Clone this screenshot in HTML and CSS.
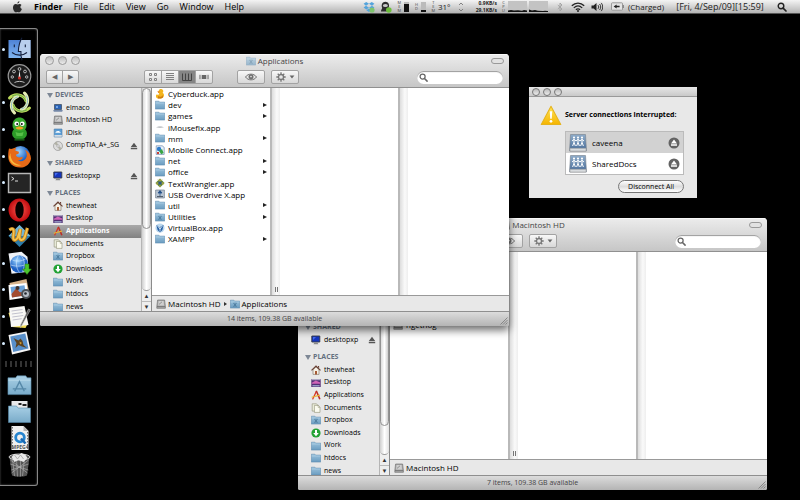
FILE: index.html
```
<!DOCTYPE html>
<html lang="en">
<head>
<meta charset="utf-8">
<title>Finder</title>
<link rel="stylesheet" href="styles.css">
</head>
<body>
<svg class="sprite" aria-hidden="true">
  <defs>
    <linearGradient id="gFolder" x1="0" y1="0" x2="0" y2="1"><stop offset="0" stop-color="#9cc3dd"/><stop offset="1" stop-color="#6a9cc0"/></linearGradient>
    <linearGradient id="gBigFolder" x1="0" y1="0" x2="0" y2="1"><stop offset="0" stop-color="#a9d0e6"/><stop offset="1" stop-color="#79abc9"/></linearGradient>
    <linearGradient id="gWarn" x1="0" y1="0" x2="0" y2="1"><stop offset="0" stop-color="#ffe65a"/><stop offset="1" stop-color="#f5b400"/></linearGradient>
    <linearGradient id="gDrive" x1="0" y1="0" x2="0" y2="1"><stop offset="0" stop-color="#8facc9"/><stop offset="1" stop-color="#476c9a"/></linearGradient>
    <linearGradient id="gFinder" x1="0" y1="0" x2="0" y2="1"><stop offset="0" stop-color="#4f83d6"/><stop offset="1" stop-color="#7fb4f0"/></linearGradient>
    <radialGradient id="gOpera"><stop offset="0" stop-color="#ff5a50"/><stop offset="1" stop-color="#c10c10"/></radialGradient>
    <radialGradient id="gGlobe" cx=".4" cy=".3"><stop offset="0" stop-color="#9fd6ff"/><stop offset="1" stop-color="#1c60c4"/></radialGradient>
  </defs>
  <symbol id="folder" viewBox="0 0 10 10"><path d="M.3 1.2h3.6l.8.9h5v7H.3z" fill="url(#gFolder)" stroke="#5684a8" stroke-width=".5"/><path d="M.6 3h8.8" stroke="#c2dcec" stroke-width=".5"/></symbol>
  <symbol id="folder-mark" viewBox="0 0 10 10"><use href="#folder"/><path d="M3.2 4l3.6 3.6M6.8 4L3.2 7.6M5 3.6v4.4" stroke="#487799" stroke-width=".8"/></symbol>
  <symbol id="laptop" viewBox="0 0 10 10"><path d="M1.5 1.5h7v5h-7z" fill="#2b63b4" stroke="#3a4658" stroke-width=".7"/><path d="M3 3h2v2H3z" fill="#74a4e4"/><path d="M.2 7h9.6l-.6 1.800H.8z" fill="#7488a8"/></symbol>
  <symbol id="hd" viewBox="0 0 10 10"><path d="M1.6 1h7l.8 6.5v1.8H.8V7.5z" fill="#a9a9a9" stroke="#666" stroke-width=".6"/><path d="M2.6 2h5l.4 4.5H2.2z" fill="#cfcfcf"/><path d="M3 5.4l3-2.6" stroke="#777" stroke-width=".7"/><path d="M1 7.6h8.2" stroke="#555" stroke-width=".6"/></symbol>
  <symbol id="idisk" viewBox="0 0 10 10"><path d="M1.2 1h7.8v8H1.2z" fill="#5d9fd6" stroke="#4a78a4" stroke-width=".6"/><path d="M2.4 4.800c0-2 4-3 5.400 0z" fill="#fff"/><path d="M1.4 7h7.4v1.800H1.4z" fill="#d7dde2"/></symbol>
  <symbol id="disc" viewBox="0 0 10 10"><circle cx="5" cy="5" r="4.5" fill="#ddd" stroke="#888" stroke-width=".6"/><path d="M5 5L1.2 3A4.3 4.3 0 0 1 4 .8zM5 5l3.8 2A4.3 4.3 0 0 1 6 9.2z" fill="#b2b2a6"/><circle cx="5" cy="5" r="1.2" fill="#fff" stroke="#777" stroke-width=".5"/></symbol>
  <symbol id="pc" viewBox="0 0 10 10"><path d="M.8 1h8v6h-8z" fill="#1636bd" stroke="#353a45" stroke-width=".9"/><path d="M2 2h3L2 5z" fill="#456cf0"/><path d="M3.4 7.4h3l1 1.8h-5z" fill="#888"/></symbol>
  <symbol id="home" viewBox="0 0 10 10"><path d="M2 4.6V9.4h6V4.6L5 2z" fill="#f6f1e6" stroke="#77695c" stroke-width=".6"/><path d="M.5 5.4L5 1l4.5 4.4" fill="none" stroke="#6a4034" stroke-width="1.1"/><path d="M4 6h2v3.4H4z" fill="#a65a34"/><path d="M7 .9h1.1v2.3L7 2.2z" fill="#6a4034"/></symbol>
  <symbol id="desk" viewBox="0 0 10 10"><path d="M.3 1h9.4v8H.3z" fill="#522e74"/><path d="M.8 4.8l4-2.4 4.4 2.2v1.2H.8z" fill="#d063b8"/><path d="M.5 1.2h9v1h-9z" fill="#c7c7d8"/><path d="M1.4 7.2h7.2v1.2H1.4z" fill="#a4b5d8"/></symbol>
  <symbol id="apps" viewBox="0 0 10 10"><path d="M1 9.2L4.8 1l1.2.6L2.2 9.5z" fill="#d83020"/><path d="M4.6 1l1.4-.4L9.6 9l-1.5.4z" fill="#bc2c24"/><path d="M.5 6.8l8.2-2.2.4 1.2-8.3 2z" fill="#e9b030"/></symbol>
  <symbol id="docs" viewBox="0 0 10 10"><path d="M1.2.8h4.3l1.2 1.3v6H1.2z" fill="#eef0df" stroke="#8c8c70" stroke-width=".6"/><path d="M3.4 2.4h4l1.6 1.7v5.3H3.4z" fill="#fbfbf0" stroke="#8c8c70" stroke-width=".6"/><path d="M7.2 2.4v2H9" fill="none" stroke="#8c8c70" stroke-width=".5"/></symbol>
  <symbol id="down" viewBox="0 0 10 10"><circle cx="5" cy="5" r="4.6" fill="#23a235"/><path d="M4 2h2v3h1.8L5 8.2 2.2 5H4z" fill="#fff"/></symbol>
  <symbol id="duck" viewBox="0 0 10 10"><path d="M4.2.8a2.2 2.2 0 0 1 3.4 3c2 1 2.2 5-1.6 5.6H2.6C.2 8.6.8 5.4 2 5.6c1 .6 2 .2 2.2-1.2L2.8 3.4z" fill="#f3b51e"/><path d="M2 2.6l2.6-.2-.6 1.4z" fill="#d95e1c"/><path d="M3 7c2 1.4 4 1 5-1v2.6L6 9.4H3z" fill="#cf7d12"/></symbol>
  <symbol id="mouse" viewBox="0 0 10 10"><path d="M1 5.3c2-1 6-1 8 0-2 .6-6 .6-8 0z" fill="#a8adb2"/></symbol>
  <symbol id="mobile" viewBox="0 0 10 10"><path d="M1.2.8h6l2 1.6v7h-8z" fill="#e8f2fa" stroke="#5577a0" stroke-width=".6"/><circle cx="4" cy="4" r="2.2" fill="#2d7bcc"/><path d="M4 6l3-2 1.6 4-2.4 1.2z" fill="#37a446"/><path d="M2 7h2v2H2z" fill="#cc4034"/></symbol>
  <symbol id="wrangler" viewBox="0 0 10 10"><path d="M5 .4L9.6 5 5 9.6.4 5z" fill="#5a8440"/><path d="M3 1.6l5.4 5.4M7 1.6L1.6 7M5 1v8M1 5h8" stroke="#c8b23e" stroke-width=".9"/><circle cx="5" cy="5" r="1.8" fill="#2c5a86"/></symbol>
  <symbol id="usb" viewBox="0 0 10 10"><path d="M.6 1h8.8v8H.6z" fill="#b8c4d2" stroke="#62707f" stroke-width=".6"/><path d="M5 2v5M3 4l2-2.4L7 4z" fill="#245088" stroke="#245088" stroke-width=".8"/><path d="M2 7.6h6" stroke="#3a4654" stroke-width=".9"/></symbol>
  <symbol id="vbox" viewBox="0 0 10 10"><circle cx="5" cy="5" r="4.6" fill="#bcd8ee"/><path d="M1.4 2l3.2 2.2L8.6 2 7.4 7 5 9.4 2.6 7z" fill="#2a62a6"/><path d="M5 4.2v4.4M2.6 3l2.4 3 2.4-3" fill="none" stroke="#e9f5fd" stroke-width=".8"/></symbol>
  <symbol id="eject" viewBox="0 0 8 8"><path d="M4 .8L7.2 5H.8zM.8 5.8h6.4v1.4H.8z" fill="#555"/></symbol>
  <symbol id="eject-round" viewBox="0 0 12 12"><circle cx="6" cy="6" r="5.5" fill="#636363"/><path d="M6 2.6L9 6.4H3zM3 7.3h6v1.4H3z" fill="#fff"/></symbol>
  <symbol id="lens" viewBox="0 0 10 10"><circle cx="4" cy="4" r="2.8" fill="none" stroke="currentColor" stroke-width="1.4"/><path d="M6.1 6.1L9 9" stroke="currentColor" stroke-width="1.7" stroke-linecap="round"/></symbol>
  <symbol id="eye" viewBox="0 0 12 8"><path d="M.5 4C3 .2 9 .2 11.5 4 9 7.8 3 7.8.5 4z" fill="none" stroke="#707070" stroke-width="1"/><circle cx="6" cy="3.8" r="2.5" fill="#707070"/><circle cx="6" cy="3.6" r=".8" fill="#eee"/></symbol>
  <symbol id="gear" viewBox="0 0 10 10"><circle cx="5" cy="5" r="2.5" fill="none" stroke="#777" stroke-width="1.3"/><path d="M5 .3v1.800M5 7.900v1.800M.3 5h1.800M7.900 5h1.800M1.700 1.700L3 3M7 7l1.300 1.300M8.300 1.700L7 3M3 7L1.700 8.300" stroke="#777" stroke-width="1.3"/></symbol>
  <symbol id="caret" viewBox="0 0 6 4"><path d="M.6.6h4.8L3 3.4z" fill="#666"/></symbol>
  <symbol id="v-icons" viewBox="0 0 10 8"><path d="M1.500.5h2v2h-2zM6.500.5h2v2h-2zM1.500 5.500h2v2h-2zM6.500 5.500h2v2h-2z" fill="#e8e8e8" stroke="#808080" stroke-width="1"/></symbol>
  <symbol id="v-list" viewBox="0 0 10 8"><path d="M1 .5h8M1 2.500h8M1 4.500h8M1 6.500h8" stroke="#808080" stroke-width="1"/></symbol>
  <symbol id="v-cols" viewBox="0 0 10 8"><path d="M.5.5v7M3.500.5v7M6.500.5v7M9.500.5v7M.5 7.500h9" stroke="#444" stroke-width="1"/></symbol>
  <symbol id="v-flow" viewBox="0 0 12 8"><path d="M3.4 1.6h5.2v4.8H3.4z" fill="#666"/><path d="M.7 1.4v5.2M2.1 1.4v5.2M9.9 1.4v5.2M11.3 1.4v5.2" stroke="#777" stroke-width=".8"/></symbol>
  <symbol id="grip" viewBox="0 0 8 8"><path d="M.5 7.5l7-7M3 7.5l4.5-4.5M5.5 7.5l2-2" stroke="#777" stroke-width=".8"/></symbol>
  <symbol id="share" viewBox="0 0 18 18"><path d="M1.5.5h15l.8 13.5v3H.7v-3z" fill="url(#gDrive)" stroke="#75808c" stroke-width=".6"/><path d="M.9 14.2h16.2v2.9H.9z" fill="#d9dcdf" stroke="#888" stroke-width=".5"/><g fill="#fff"><circle cx="5" cy="3.6" r="1.1"/><circle cx="9" cy="3.6" r="1.1"/><circle cx="13" cy="3.6" r="1.1"/></g><path d="M3 7l2-1.700L7 7l2-1.700L11 7l2-1.700L15 7M5 5.300v3L3.600 12M5 8.300L6.400 12M9 5.300v3L7.600 12M9 8.300l1.400 3.700M13 5.300v3L11.600 12M13 8.300l1.400 3.700" fill="none" stroke="#fff" stroke-width="1"/></symbol>
</svg>

<header class="menubar">
  <nav class="menus" aria-label="Menu bar">
    <button class="apple" aria-label="Apple"><svg viewBox="0 0 10 12"><path d="M6.9.3c.1 1.200-.9 2.300-2 2.300C4.800 1.500 5.800.4 6.900.3zM9 4C7.300 5 7.600 7.400 9.400 8.100 8.700 10 7.700 11.400 6.700 11.300c-.8-.1-1-.4-1.700-.4s-1 .4-1.700.4C1.800 11.300.4 8.600.5 6.300.6 4 2 2.900 3.300 2.900c.8 0 1.300.5 1.900.5.500 0 1.100-.5 2-.5.7 0 1.400.4 1.800 1.100z" fill="#2a2a2a"/></svg></button>
    <button class="current">Finder</button><button>File</button><button>Edit</button><button>View</button><button>Go</button><button>Window</button><button>Help</button>
  </nav>
  <div class="extras">
    <svg class="m12" viewBox="0 0 12 12"><path d="M3.200 1L6 2.800 3 4.800.6 2.800zM8.800 1L6 2.800l3 2 2.400-2zM.6 6.600L3 4.800 6 6.700 3.300 8.500zM11.400 6.600L9 4.800 6 6.700l2.700 1.800zM3.300 9.300L6 7.500l2.700 1.800L6 11z" fill="#54a4dc"/><circle cx="9" cy="9" r="2.600" fill="#7fc46e"/></svg>
    <svg class="m12" viewBox="0 0 12 12"><path d="M1 10.500c0-2 1-2.500 1.200-3.500C.8 3.600 2.600.8 5.400.8S10 3.600 8.600 7c.2 1 1.600 1.500 1.600 3.500z" fill="#2c2c2c"/><ellipse cx="5.400" cy="4.500" rx="2.500" ry="1.500" fill="#c9c9c9"/><circle cx="8.800" cy="9" r="2.800" fill="#6cbd3c"/></svg>
    <span class="stack"><i>M</i><i>E</i><i>M</i></span><span class="meter"><b class="full"></b></span>
    <span class="stack gap-a"><i>H</i><i>D</i></span><span class="meter"><b class="low"></b></span>
    <span class="stack gap-a"><i>T</i><i>E</i><i>M</i></span><span class="temp">31°</span>
    <svg class="updown" viewBox="0 0 6 10"><path d="M1 3l2-2 2 2M1 7l2 2 2-2" fill="none" stroke="#777" stroke-width=".9"/></svg>
    <span class="net"><span>0.9KB/s</span><span>29.1KB/s</span></span>
    <span class="stack"><i>C</i><i>P</i><i>U</i></span>
    <svg class="graph" viewBox="0 0 19 11"><path d="M0 0h19v11H0z" fill="#c3c3c3"/><path d="M0 11V9.500l3-.5 3 .6 4-.3 4 .4 2-.7 3 .5V11z" fill="#111"/></svg>
    <svg class="graph" viewBox="0 0 19 11"><path d="M0 0h19v11H0z" fill="#c3c3c3"/><path d="M0 11V8.500l3 1 3-.6 3 .9 5 .3 2-.4 3 .3V11z" fill="#111"/></svg>
    <svg class="bt" viewBox="0 0 6 10"><path d="M.8 3l4.200 4L3 9V1l2 2L.8 7" fill="none" stroke="#a0a0a0" stroke-width=".9"/></svg>
    <svg class="wifi" viewBox="0 0 14 10"><path d="M.8 3.800c3.600-3.600 8.800-3.600 12.400 0M2.800 5.900c2.600-2.500 5.800-2.500 8.400 0M4.900 7.800c1.400-1.200 2.800-1.200 4.200 0" fill="none" stroke="#222" stroke-width="1.300"/><circle cx="7" cy="9" r="1" fill="#222"/></svg>
    <svg class="sound" viewBox="0 0 12 10"><path d="M.5 3.500H2.600L5.500 1v8L2.600 6.500H.5z" fill="#222"/><path d="M7 3.200c.9 1.100.9 2.500 0 3.600M8.600 2c1.500 1.800 1.500 4.200 0 6M10.200.9c2 2.500 2 5.700 0 8.200" fill="none" stroke="#222" stroke-width=".9"/></svg>
    <svg class="battery" viewBox="0 0 13 9"><rect x=".5" y=".8" width="11" height="7.400" rx=".8" fill="#e4e4e4" stroke="#8a8a8a" stroke-width=".8"/><path d="M12.300 3v3" stroke="#777" stroke-width="1"/><path d="M2.600 4.500l3-2v1.300h3v1.400h-3v1.300z" fill="#222"/></svg>
    <span class="charge">(Charged)</span>
    <time class="clock">[Fri, 4/Sep/09][15:59]</time>
    <button class="spot" aria-label="Spotlight"><svg viewBox="0 0 10 10"><use href="#lens"/></svg></button>
  </div>
</header>

<aside class="dock" aria-label="Dock">
  <span class="tile on"><svg viewBox="0 0 24 24"><path d="M1 3h22v18H1z" fill="url(#gFinder)"/><path d="M13.500 3H23v18h-9.500c-.6-2-.7-4-.6-6H11c0-5 .8-8.500 2.500-12z" fill="#b9cfee"/><path d="M14.500.8C12 5 11 9 10.900 14.500h2.500c-.2 3 .2 6 1.200 8.700M4.500 15.500c4.500 3.500 10.500 3.500 15 0M6.800 7.500v2.700M17.800 7.500v2.700" fill="none" stroke="#15203e" stroke-width="1.100"/></svg></span>
  <span class="tile"><svg viewBox="0 0 24 24"><circle cx="12" cy="12" r="11.300" fill="#1c1c1c" stroke="#999" stroke-width="1.200"/><g fill="none" stroke="#bbb" stroke-width="1"><circle cx="6.500" cy="7.500" r="1.400"/><circle cx="12" cy="5" r="1.400"/><circle cx="17.500" cy="7.500" r="1.400"/><circle cx="4.800" cy="13" r="1.200"/><circle cx="19.200" cy="13" r="1.200"/><path d="M7 18.500c3-1.500 7-1.500 10 0"/></g><path d="M12 6l1 8h-2z" fill="#eee"/><circle cx="12" cy="14" r="1.600" fill="#c92c24"/></svg></span>
  <span class="tile on"><svg viewBox="0 0 24 24"><g fill="none" stroke-linecap="round"><path d="M2 7C7 2 16 3 18.500 10M22 17c-5 5-14 4-16.500-3" stroke="#bcd95c" stroke-width="3"/><path d="M17 2c5 5 4 14-3 16.500M7 22c-5-5-4-14 3-16.500" stroke="#e6eeb4" stroke-width="3"/><path d="M5 5c6-3 12 0 13 5M19 19c-6 3-12 0-13-5" stroke="#5fa54a" stroke-width="1"/><path d="M19 5c3 6 0 12-5 13M5 19c-3-6 0-12 5-13" stroke="#8dbdcc" stroke-width="1"/></g></svg></span>
  <span class="tile on"><svg viewBox="0 0 24 24"><ellipse cx="12" cy="16.500" rx="7.500" ry="6.500" fill="#2c9c28"/><path d="M5 8c0-10 14-10 14 0 0 5-3 6-7 6s-7-1-7-6z" fill="#38a82e"/><path d="M7 22.600h10" stroke="#185e16" stroke-width="2"/><circle cx="9.200" cy="6.800" r="2.300" fill="#fff"/><circle cx="14.800" cy="6.800" r="2.300" fill="#fff"/><circle cx="9.700" cy="7" r="1" fill="#111"/><circle cx="14.300" cy="7" r="1" fill="#111"/><path d="M8 11c2-2 6-2 8 0-2 2-6 2-8 0z" fill="#f0a420"/><path d="M8 15c3 1.400 5 1.400 8 0l-1 4H9z" fill="#57c048"/></svg></span>
  <span class="tile on"><svg viewBox="0 0 24 24"><circle cx="13" cy="11.500" r="9.500" fill="url(#gGlobe)"/><path d="M1.500 4.500C3 5 4 5 5.500 4.600 7 3.500 8 3.600 9 3.800c-1 1-1.300 2-1 3l3.500 1-.5 2-2.600 1c.2 3 4 3.200 6.600 2 .8 2-2 4-5 3.600 4 2 8 0 9.200-4 .3-3-.4-5-2-7 4 2 6.300 5 6.300 9-.3 5-5 9.100-11 9.100C5.500 23.500.7 19 .7 12.500.7 9 1 6.500 1.500 4.500z" fill="#e66a18"/><path d="M3 9c-.5 7 4 12 11 12-5 2.500-12-1.500-12.400-8z" fill="#f8b93c"/></svg></span>
  <span class="tile on"><svg viewBox="0 0 24 24"><path d="M1 2.500h22v19H1z" fill="#252525" stroke="#b8b8b8" stroke-width="1.400"/><path d="M4 6l2.500 1.700L4 9.400M7.500 10h3" fill="none" stroke="#ddd" stroke-width="1"/></svg></span>
  <span class="tile on"><svg viewBox="0 0 24 24"><ellipse cx="12" cy="12" rx="11" ry="11.600" fill="url(#gOpera)"/><ellipse cx="12" cy="12" rx="4.200" ry="8.500" fill="#0a0000"/></svg></span>
  <span class="tile"><svg viewBox="0 0 24 24"><path d="M12 1l11 11-11 11L1 12z" fill="#2b7aa8"/><path d="M12 1l11 11H1z" fill="#73b6d4"/><path d="M2 6c4-3 5 0 4 5s1 7 4 3l3-9c-1 6-2 11 1 11 4 0 4-7 6-12" fill="none" stroke="#c07a12" stroke-width="3.600"/><path d="M2 6c4-3 5 0 4 5s1 7 4 3l3-9c-1 6-2 11 1 11 4 0 4-7 6-12" fill="none" stroke="#f4c550" stroke-width="1.900"/></svg></span>
  <span class="tile on"><svg viewBox="0 0 24 24"><path d="M1 2.500L14 .8l6 5 1 15-17 2z" fill="#eef1f6"/><circle cx="11.500" cy="13" r="8.800" fill="url(#gGlobe)"/><path d="M5 9c5 2 9 1 13-1M3.500 14c6 2 12 1 16-1M11 4.500c-3 5-3 12 1 17M14 5c4 5 3 11 1 16" fill="none" stroke="#d9ecff" stroke-width=".6"/><path d="M17.500 13h4v5h2.400L19.500 23.500 15 18h2.500z" fill="#4cc42e" stroke="#20780e" stroke-width=".5"/></svg></span>
  <span class="tile on"><svg viewBox="0 0 24 24"><path d="M2 5l17-4 3 15-18 4z" fill="#d8b48c"/><path d="M1 7l18-2 2 14-19 3z" fill="#fff"/><path d="M3 9l14-1.700 1.500 10L4.500 19.500z" fill="#6ca2d8"/><path d="M4 16l5-6 3 4 5 1v2.500L4.500 19.500z" fill="#a34c30"/><circle cx="10" cy="10" r="2" fill="#40302a"/><circle cx="18.500" cy="16" r="5" fill="#4d5257"/><circle cx="18.500" cy="16" r="3" fill="#b7bec6"/><circle cx="18" cy="15.500" r="1.300" fill="#23292f"/></svg></span>
  <span class="tile on"><svg viewBox="0 0 24 24"><path d="M1 8l5-2 14 13-2 4-13-1z" fill="#f0db52"/><path d="M1.500 3l15.500-2 4 19L3.500 22z" fill="#f8f8f5"/><path d="M4 6l11-1.500M4.400 9l11-1.500M4.800 12l11-1.500M5.200 15l9-1.300" stroke="#aab" stroke-width=".7"/><path d="M22.800 5L13 22.500l.3-3L21 4z" fill="#555" stroke="#bbb" stroke-width=".6"/></svg></span>
  <span class="tile on"><svg viewBox="0 0 24 24"><path d="M1 4l18-3.500 4 18.500L4.500 23.500z" fill="#f4f4f4"/><path d="M2.800 5.400L17.800 2.500l3.200 15L5.700 21z" fill="#588fc9"/><path d="M6 7l5 2.500 2-2 2 2.500 1 4 3.500 3-5-1.500L11 14l-3 3 1-5z" fill="#5c4320"/><path d="M12 10.500l2.500 1.500-2 1.500z" fill="#d49e32"/></svg></span>
  <hr class="divider">
  <span class="tile"><svg viewBox="0 0 26 24"><path d="M1 4.500h8l1.500-2h9l1.500 2h4V22H1z" fill="url(#gBigFolder)" stroke="#588aa9" stroke-width=".6"/><path d="M1.300 7h23.400" stroke="#c7e1ef" stroke-width=".7"/><path d="M8 18.500l5-10 5 10M6 16h14" fill="none" stroke="#5588a8" stroke-width="1.500"/></svg></span>
  <span class="tile"><svg viewBox="0 0 24 24"><path d="M4 1h16v9H4z" fill="#e8e8ea"/><path d="M11 3h3v2h-3zM15 4h4v2h-4z" fill="#222"/><path d="M1 6h8l1.500 2H23v14.500H1z" fill="url(#gBigFolder)" stroke="#588aa9" stroke-width=".6"/></svg></span>
  <span class="tile"><svg viewBox="0 0 24 24"><path d="M4 0h12l5 5v19H4z" fill="#f0f0f0"/><path d="M16 0v5h5z" fill="#b5b5b5"/><path d="M5 1v22M20 6v17" stroke="#777" stroke-width="1" stroke-dasharray="1.500 1.500"/><circle cx="12.500" cy="11.500" r="4.300" fill="none" stroke="#2584cf" stroke-width="2.800"/><path d="M13.500 12.500l4.500 5" stroke="#1869b4" stroke-width="2.500"/><text x="12.500" y="22.500" class="doc-kind">MPEG4</text></svg></span>
  <span class="tile"><svg viewBox="0 0 24 24"><path d="M2 4l2.500 18.500c4 1.600 11 1.600 15 0L22 4z" fill="#6b6b6b" fill-opacity=".8"/><path d="M5 6l2 17M9 6l1 17.500M13 6v17.500M17 6l-2 17M2.800 11l18 6M21 11L3.800 17M3 7l17 13M21 7L4 20" stroke="#b5b5b5" stroke-width=".6"/><ellipse cx="12" cy="4" rx="10.500" ry="3" fill="#555" stroke="#ccc" stroke-width="1"/><path d="M4 4l3-3 4 1 3-2 4 2 2 3-4 4-5-2-4 2z" fill="#e9e9e9"/><path d="M7 2l3 4 3-4 3 4" fill="none" stroke="#999" stroke-width=".7"/></svg></span>
</aside>

<main class="desktop">
  <section class="window back narrow" aria-label="Macintosh HD">
    <header class="chrome">
      <div class="titlebar"><div class="lights"><button aria-label="Close"></button><button aria-label="Minimize"></button><button aria-label="Zoom"></button></div><h2><svg viewBox="0 0 10 10"><use href="#hd"/></svg>Macintosh HD</h2><button class="pill" aria-label="Toggle toolbar"></button></div>
      <div class="toolbar">
        <div class="group nav"><button aria-label="Back">◀</button><button aria-label="Forward">▶</button></div>
        <div class="group views"><button aria-label="Icons"><svg viewBox="0 0 10 8"><use href="#v-icons"/></svg></button><button aria-label="List"><svg viewBox="0 0 10 8"><use href="#v-list"/></svg></button><button class="picked" aria-label="Columns"><svg viewBox="0 0 10 8"><use href="#v-cols"/></svg></button><button aria-label="Cover flow"><svg viewBox="0 0 12 8"><use href="#v-flow"/></svg></button></div>
        <div class="group look"><button aria-label="Quick look"><svg class="eye" viewBox="0 0 12 8"><use href="#eye"/></svg></button></div>
        <div class="group act"><button aria-label="Action"><svg viewBox="0 0 10 10"><use href="#gear"/></svg><svg class="caret" viewBox="0 0 6 4"><use href="#caret"/></svg></button></div>
        <label class="search"><svg viewBox="0 0 10 10"><use href="#lens"/></svg><input type="text" aria-label="Search"></label>
      </div>
    </header>
    <div class="body">
      <nav class="sidebar" aria-label="Places">
        <h3>DEVICES</h3>
        <ul><li><svg viewBox="0 0 10 10"><use href="#laptop"/></svg>elmaco</li><li><svg viewBox="0 0 10 10"><use href="#hd"/></svg>Macintosh HD</li><li><svg viewBox="0 0 10 10"><use href="#idisk"/></svg>iDisk</li><li><svg viewBox="0 0 10 10"><use href="#disc"/></svg>CompTIA_A+</li></ul>
        <h3>SHARED</h3>
        <ul><li><svg viewBox="0 0 10 10"><use href="#pc"/></svg>desktopxp<button class="eject" aria-label="Eject"><svg viewBox="0 0 8 8"><use href="#eject"/></svg></button></li></ul>
        <h3>PLACES</h3>
        <ul><li><svg viewBox="0 0 10 10"><use href="#home"/></svg>thewheat</li><li><svg viewBox="0 0 10 10"><use href="#desk"/></svg>Desktop</li><li><svg viewBox="0 0 10 10"><use href="#apps"/></svg>Applications</li><li><svg viewBox="0 0 10 10"><use href="#docs"/></svg>Documents</li><li><svg viewBox="0 0 10 10"><use href="#folder-mark"/></svg>Dropbox</li><li><svg viewBox="0 0 10 10"><use href="#down"/></svg>Downloads</li><li><svg viewBox="0 0 10 10"><use href="#folder"/></svg>Work</li><li><svg viewBox="0 0 10 10"><use href="#folder"/></svg>htdocs</li><li><svg viewBox="0 0 10 10"><use href="#folder"/></svg>news</li></ul>
      </nav>
      <div class="scrollbar"><div class="track"><div class="thumb"></div></div><button aria-label="Scroll up">▲</button><button aria-label="Scroll down">▼</button></div>
      <div class="content">
        <div class="columns">
          <ul class="files"><li><svg viewBox="0 0 10 10"><use href="#folder"/></svg>Applications</li><li><svg viewBox="0 0 10 10"><use href="#folder"/></svg>Developer</li><li><svg viewBox="0 0 10 10"><use href="#folder"/></svg>Library</li><li><svg viewBox="0 0 10 10"><use href="#folder"/></svg>System</li><li><svg viewBox="0 0 10 10"><use href="#folder"/></svg>Users</li><li><svg viewBox="0 0 10 10"><use href="#folder"/></svg>opt</li><li><svg viewBox="0 0 10 10"><use href="#hd"/></svg>ngetnog</li></ul>
          <div class="gutter"><span class="handle"></span></div>
          <div class="files"></div>
          <div class="gutter"></div>
          <div class="rest"></div>
        </div>
        <div class="pathbar"><svg viewBox="0 0 10 10"><use href="#hd"/></svg><span>Macintosh HD</span></div>
      </div>
    </div>
    <footer class="status"><span>7 items, 109.38 GB available</span><svg class="grip" viewBox="0 0 8 8"><use href="#grip"/></svg></footer>
  </section>

  <section class="dialog" role="dialog" aria-label="Server connections interrupted">
    <div class="dialog-bar lights"><button aria-label="Close"></button><button aria-label="Minimize"></button><button aria-label="Zoom"></button></div>
    <div class="dialog-body">
      <svg class="warn" viewBox="0 0 20 20"><path d="M10 1.200L19.300 18.600H.7z" fill="url(#gWarn)" stroke="#e5b31c" stroke-width="1" stroke-linejoin="round"/><path d="M8.800 6h2.400l-.5 7H9.300z" fill="#fff"/><circle cx="10" cy="15.500" r="1.300" fill="#fff"/></svg>
      <div class="dialog-main">
        <h2>Server connections interrupted:</h2>
        <ul class="servers">
          <li class="picked"><svg class="share" viewBox="0 0 18 18"><use href="#share"/></svg><span>caveena</span><button aria-label="Disconnect caveena"><svg viewBox="0 0 12 12"><use href="#eject-round"/></svg></button></li>
          <li><svg class="share" viewBox="0 0 18 18"><use href="#share"/></svg><span>SharedDocs</span><button aria-label="Disconnect SharedDocs"><svg viewBox="0 0 12 12"><use href="#eject-round"/></svg></button></li>
        </ul>
        <button class="disconnect">Disconnect All</button>
      </div>
    </div>
  </section>

  <section class="window front" aria-label="Applications">
    <header class="chrome">
      <div class="titlebar"><div class="lights"><button aria-label="Close"></button><button aria-label="Minimize"></button><button aria-label="Zoom"></button></div><h2><svg class="faded" viewBox="0 0 10 10"><use href="#folder-mark"/></svg>Applications</h2><button class="pill" aria-label="Toggle toolbar"></button></div>
      <div class="toolbar">
        <div class="group nav"><button aria-label="Back">◀</button><button aria-label="Forward">▶</button></div>
        <div class="group views"><button aria-label="Icons"><svg viewBox="0 0 10 8"><use href="#v-icons"/></svg></button><button aria-label="List"><svg viewBox="0 0 10 8"><use href="#v-list"/></svg></button><button class="picked" aria-label="Columns"><svg viewBox="0 0 10 8"><use href="#v-cols"/></svg></button><button aria-label="Cover flow"><svg viewBox="0 0 12 8"><use href="#v-flow"/></svg></button></div>
        <div class="group look"><button aria-label="Quick look"><svg class="eye" viewBox="0 0 12 8"><use href="#eye"/></svg></button></div>
        <div class="group act"><button aria-label="Action"><svg viewBox="0 0 10 10"><use href="#gear"/></svg><svg class="caret" viewBox="0 0 6 4"><use href="#caret"/></svg></button></div>
        <label class="search"><svg viewBox="0 0 10 10"><use href="#lens"/></svg><input type="text" aria-label="Search"></label>
      </div>
    </header>
    <div class="body">
      <nav class="sidebar" aria-label="Places">
        <h3>DEVICES</h3>
        <ul><li><svg viewBox="0 0 10 10"><use href="#laptop"/></svg>elmaco</li><li><svg viewBox="0 0 10 10"><use href="#hd"/></svg>Macintosh HD</li><li><svg viewBox="0 0 10 10"><use href="#idisk"/></svg>iDisk</li><li><svg viewBox="0 0 10 10"><use href="#disc"/></svg>CompTIA_A+_SG<button class="eject" aria-label="Eject"><svg viewBox="0 0 8 8"><use href="#eject"/></svg></button></li></ul>
        <h3>SHARED</h3>
        <ul><li><svg viewBox="0 0 10 10"><use href="#pc"/></svg>desktopxp<button class="eject" aria-label="Eject"><svg viewBox="0 0 8 8"><use href="#eject"/></svg></button></li></ul>
        <h3>PLACES</h3>
        <ul><li><svg viewBox="0 0 10 10"><use href="#home"/></svg>thewheat</li><li><svg viewBox="0 0 10 10"><use href="#desk"/></svg>Desktop</li><li class="picked"><svg viewBox="0 0 10 10"><use href="#apps"/></svg>Applications</li><li><svg viewBox="0 0 10 10"><use href="#docs"/></svg>Documents</li><li><svg viewBox="0 0 10 10"><use href="#folder-mark"/></svg>Dropbox</li><li><svg viewBox="0 0 10 10"><use href="#down"/></svg>Downloads</li><li><svg viewBox="0 0 10 10"><use href="#folder"/></svg>Work</li><li><svg viewBox="0 0 10 10"><use href="#folder"/></svg>htdocs</li><li><svg viewBox="0 0 10 10"><use href="#folder"/></svg>news</li></ul>
      </nav>
      <div class="scrollbar"><div class="track"><div class="thumb"></div></div><button aria-label="Scroll up">▲</button><button aria-label="Scroll down">▼</button></div>
      <div class="content">
        <div class="columns">
          <ul class="files">
            <li><svg viewBox="0 0 10 10"><use href="#duck"/></svg>Cyberduck.app</li>
            <li class="dir"><svg viewBox="0 0 10 10"><use href="#folder"/></svg>dev</li>
            <li class="dir"><svg viewBox="0 0 10 10"><use href="#folder"/></svg>games</li>
            <li><svg viewBox="0 0 10 10"><use href="#mouse"/></svg>iMousefix.app</li>
            <li class="dir"><svg viewBox="0 0 10 10"><use href="#folder"/></svg>mm</li>
            <li><svg viewBox="0 0 10 10"><use href="#mobile"/></svg>Mobile Connect.app</li>
            <li class="dir"><svg viewBox="0 0 10 10"><use href="#folder"/></svg>net</li>
            <li class="dir"><svg viewBox="0 0 10 10"><use href="#folder"/></svg>office</li>
            <li><svg viewBox="0 0 10 10"><use href="#wrangler"/></svg>TextWrangler.app</li>
            <li><svg viewBox="0 0 10 10"><use href="#usb"/></svg>USB Overdrive X.app</li>
            <li class="dir"><svg viewBox="0 0 10 10"><use href="#folder"/></svg>util</li>
            <li class="dir"><svg viewBox="0 0 10 10"><use href="#folder-mark"/></svg>Utilities</li>
            <li><svg viewBox="0 0 10 10"><use href="#vbox"/></svg>VirtualBox.app</li>
            <li class="dir"><svg viewBox="0 0 10 10"><use href="#folder"/></svg>XAMPP</li>
          </ul>
          <div class="gutter"><span class="handle"></span></div>
          <div class="files"></div>
          <div class="gutter"></div>
          <div class="rest"></div>
        </div>
        <div class="pathbar"><svg viewBox="0 0 10 10"><use href="#hd"/></svg><span>Macintosh HD</span><i class="sep"></i><svg viewBox="0 0 10 10"><use href="#folder-mark"/></svg><span>Applications</span></div>
      </div>
    </div>
    <footer class="status"><span>14 items, 109.38 GB available</span><svg class="grip" viewBox="0 0 8 8"><use href="#grip"/></svg></footer>
  </section>
</main>
</body>
</html>
```
FILE: styles.css
```
* { box-sizing: border-box; }

body {
  margin: 0;
  height: 100vh;
  overflow: hidden;
  background: #000;
  color: #000;
  font: 8px/1.4 "Open Sans", "Noto Sans", sans-serif;
}

button, input {
  margin: 0;
  padding: 0;
  border: 0;
  background: none;
  color: inherit;
  font: inherit;
}

h2, h3, ul { margin: 0; padding: 0; font: inherit; list-style: none; }
svg { display: block; flex: none; }
.sprite { position: absolute; width: 0; height: 0; }

/* Menu bar */
.menubar {
  display: flex;
  align-items: center;
  justify-content: space-between;
  height: 14px;
  padding: 0 13px 0 12px;
  background: linear-gradient(#f4f4f4, #b4b4b4);
  border-bottom: 1px solid #555;
  font-size: 9px;
  line-height: 13px;
}
.menus, .extras { display: flex; align-items: center; }
.menus { gap: 11px; }
.menus .current { font-weight: 700; }
.apple svg { width: 11px; height: 12px; }
.extras { color: #222; }
.m12 { width: 12px; height: 12px; margin-right: 5px; }
.stack {
  display: flex;
  flex-direction: column;
  width: 5px;
  color: #444;
  font-size: 4px;
  line-height: 4px;
  text-align: center;
}
.stack i { font-style: normal; }
.meter { display: flex; align-items: flex-end; width: 5px; height: 10px; margin-left: 2px; background: #bbb; }
.meter b { width: 100%; background: #111; }
.meter .full { height: 75%; }
.meter .low { height: 20%; }
.gap-a { margin-left: 5px; }
.temp { margin: 0 5px 0 2px; width: 15px; font-size: 8px; }
.updown { width: 6px; height: 10px; margin-right: 6px; }
.net { display: flex; flex-direction: column; width: 27px; margin-right: 4px; font-size: 5px; font-weight: 700; line-height: 7px; text-align: right; }
.graph { width: 19px; height: 11px; margin-left: 2px; }
.bt { width: 6px; height: 10px; margin-left: 9px; }
.wifi { width: 14px; height: 10px; margin-left: 8px; }
.sound { width: 12px; height: 10px; margin-left: 6px; }
.battery { width: 13px; height: 9px; margin-left: 8px; }
.charge { margin-left: 4px; font-size: 8px; }
.clock { min-width: 92px; margin: 0 11px 0 10px; text-align: center; }
.spot svg { width: 10px; height: 10px; }

/* Dock */
.dock {
  position: absolute;
  top: 28px;
  bottom: 14px;
  left: 0;
  display: flex;
  flex-direction: column;
  justify-content: space-between;
  width: 38px;
  padding: 8px 5px 8px 0;
  border: 1px solid #888;
  border-left: 0;
  border-radius: 0 3px 3px 0;
  box-shadow: inset 0 0 2px #666;
}
.tile { display: flex; align-items: center; justify-content: flex-end; width: 32px; }
.tile svg { width: 25px; height: 24px; }
.tile.on::before { content: ""; width: 3px; height: 3px; margin: 0 auto; border-radius: 50%; background: #d7ecff; }
.divider {
  width: 28px;
  height: 6px;
  margin: 3px 0 3px 5px;
  border: 0;
  background: repeating-linear-gradient(90deg, #333 0 2px, transparent 2px 5px);
}
.doc-kind { font: 700 5px "Open Sans", sans-serif; fill: #555; text-anchor: middle; }

/* Finder windows */
.window {
  position: absolute;
  display: flex;
  flex-direction: column;
  width: 469px;
  height: 272px;
  border-radius: 4px 4px 2px 2px;
  background: #e8e8e8;
  overflow: hidden;
  --side: 101px;
}
.front { left: 40px; top: 54px; box-shadow: 0 4px 8px rgba(0, 0, 0, .6); }
.back { left: 298px; top: 218px; }
.narrow { --side: 81px; }

.chrome { flex: none; height: 34px; background: linear-gradient(#ececec, #c6c6c6); border-bottom: 1px solid #909090; box-shadow: inset 0 1px #f8f8f8; }
.titlebar { display: flex; align-items: center; height: 13px; padding: 0 5px; color: #444; }
.titlebar h2 { display: flex; flex: 1; align-items: center; justify-content: center; gap: 2px; }
.titlebar h2 svg { width: 10px; height: 10px; }
.faded { opacity: .6; }
.lights { display: flex; gap: 4px; }
.lights button { width: 9px; height: 9px; border: 1px solid #999; border-radius: 50%; background: linear-gradient(#bbb, #ececec); }
.titlebar .lights { width: 36px; }
.pill { width: 13px; height: 6px; border: 1px solid #999; border-radius: 3px; background: #e2e2e2; }
.titlebar .pill { margin-left: 23px; }

.toolbar { display: flex; align-items: center; height: 20px; padding: 0 6px; }
.group { display: flex; height: 14px; border: 1px solid #a2a2a2; border-radius: 2px; background: linear-gradient(#f8f8f8, #d8d8d8); color: #666; }
.group button { display: flex; flex: 1; align-items: center; justify-content: center; font-size: 7px; line-height: 12px; }
.group button + button { border-left: 1px solid #a2a2a2; }
.group .picked { background: #858585; }
.nav { width: 33px; }
.views { width: 69px; margin-left: 65px; }
.views svg { width: 10px; height: 8px; }
.look { width: 28px; margin-left: 24px; }
.look svg { width: 12px; height: 8px; }
.act { width: 28px; margin-left: 6px; }
.act button { gap: 3px; }
.act svg { width: 10px; height: 10px; }
.act .caret { width: 6px; height: 4px; }
.search { display: flex; align-items: center; width: 86px; height: 13px; margin-left: auto; padding: 0 2px; border-radius: 7px; background: #fff; color: #666; box-shadow: inset 0 1px 1px #999; }
.search svg { width: 9px; height: 9px; }
.search input { flex: 1; min-width: 0; }

.body { display: flex; flex: 1; min-height: 0; }
.sidebar { flex: none; width: var(--side); padding-top: 1px; overflow: hidden; font-size: 7px; line-height: 1.8; white-space: nowrap; }
.sidebar h3 { display: flex; align-items: center; gap: 2px; padding-left: 7px; color: #65707f; font-weight: 700; }
.sidebar h3::before { content: ""; border: 3px solid transparent; border-width: 5px 3px 0; border-top-color: #7d8795; }
.sidebar ul + h3 { margin-top: 5px; }
.sidebar li { display: flex; align-items: center; gap: 3px; padding: 0 3px 0 13px; }
.sidebar svg { width: 10px; height: 10px; }
.sidebar .picked { background: linear-gradient(#a9a9a9, #818181); color: #fff; font-weight: 700; }
.eject { margin-left: auto; }
.sidebar .eject svg { width: 8px; height: 8px; }

.scrollbar { display: flex; flex: none; flex-direction: column; width: 11px; border-left: 1px solid #b5b5b5; border-right: 1px solid #8b8b8b; background: #eee; }
.track { flex: 1; border-radius: 0 0 5px 5px; background: linear-gradient(90deg, #cfcfcf, #fff 50%, #e2e2e2); border-bottom: 1px solid #999; }
.thumb { height: 70%; border: 1px solid #929292; border-radius: 5px; background: linear-gradient(90deg, #ddd, #fff 50%, #ccc); }
.narrow .thumb { height: 86%; }
.scrollbar button { height: 10px; font-size: 6px; line-height: 10px; color: #333; }
.scrollbar button + button { border-top: 1px solid #bbb; }

.content { display: flex; flex: 1; flex-direction: column; min-width: 0; }
.columns { display: flex; flex: 1; min-height: 0; background: #fff; }
.files { flex: none; width: 118px; padding: 0 3px; overflow: hidden; white-space: nowrap; }
.files li { display: flex; align-items: center; gap: 3px; }
.files svg { width: 10px; height: 10px; }
.dir::after { content: ""; margin-left: auto; border: 2px solid transparent; border-width: 2px 0 2px 4px; border-left-color: #222; }
.gutter { display: flex; flex: none; align-items: flex-end; justify-content: center; width: 10px; padding-bottom: 3px; border-left: 2px solid #b9b9b9; background: linear-gradient(90deg, #ddd, #fafafa 60%, #eee); }
.handle { width: 3px; height: 5px; border: 1px solid #777; border-width: 0 1px; }
.pathbar { display: flex; flex: none; align-items: center; gap: 2px; height: 16px; padding: 0 4px; border-top: 1px solid #999; background: #e8e8e8; }
.pathbar svg { width: 10px; height: 10px; }
.sep { margin: 0 1px; border: 2px solid transparent; border-width: 2px 0 2px 3px; border-left-color: #333; }

.status { display: flex; flex: none; align-items: center; justify-content: center; height: 15px; padding-left: 10px; border-top: 1px solid #8f8f8f; background: linear-gradient(#dcdcdc, #b4b4b4); color: #444; font-size: 7px; }
.status span { flex: 1; text-align: center; }
.grip { align-self: flex-end; width: 8px; height: 8px; margin: 1px; }

/* Server dialog */
.dialog { position: absolute; left: 529px; top: 87px; width: 168px; background: #e8e8e8; font-size: 7px; }
.dialog-bar { align-items: center; height: 10px; padding: 0 3px; background: linear-gradient(#e6e6e6, #c9c9c9); border-bottom: 1px solid #999; }
.dialog-bar button { width: 8px; height: 8px; border-color: #777; }
.dialog-bar.lights { gap: 3px; }
.dialog-body { display: flex; gap: 3px; padding: 8px 13px 5px 11px; }
.warn { width: 22px; height: 21px; }
.dialog-main { display: flex; flex: 1; flex-direction: column; align-items: flex-end; }
.dialog h2 { align-self: stretch; padding: 5px 0 11px; font-weight: 700; line-height: 10px; white-space: nowrap; }
.servers { align-self: stretch; border: 1px solid #bbb; background: #fff; }
.servers li { display: flex; align-items: center; gap: 5px; height: 21px; padding: 0 3px; }
.servers .picked { background: #d2d2d2; }
.servers span { flex: 1; font-size: 8px; }
.share { width: 18px; height: 18px; }
.servers button svg { width: 12px; height: 12px; }
.disconnect { width: 66px; height: 13px; margin-top: 5px; border: 1px solid #777; border-radius: 7px; background: linear-gradient(#fff, #ddd 50%, #fff); line-height: 10px; }
```
